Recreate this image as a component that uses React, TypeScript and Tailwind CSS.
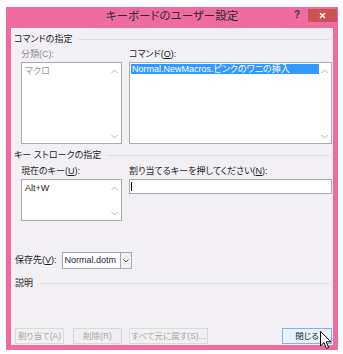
import React from 'react';

const jp = "font-['Liberation_Sans','Noto_Sans_CJK_JP',sans-serif] [font-feature-settings:'palt']";

const Chevron: React.FC<{ down?: boolean }> = ({ down }) => (
  <svg width="7" height="5" viewBox="0 0 7 5" className="block">
    <path d={down ? 'M0.5 1 L3.5 4 L6.5 1' : 'M0.5 4 L3.5 1 L6.5 4'} fill="none" stroke="#b5b5b5" strokeWidth="1" />
  </svg>
);

const ListBox: React.FC<{ className?: string; children?: React.ReactNode }> = ({ className, children }) => (
  <div className={`relative bg-white border border-[#acacac] ${className || ''}`}>
    <div className="pr-[12px]">{children}</div>
    <div className="absolute right-[3px] top-[6px]"><Chevron /></div>
    <div className="absolute right-[3px] bottom-[4px]"><Chevron down /></div>
  </div>
);

const SectionHeader: React.FC<{ title: string; className?: string }> = ({ title, className }) => (
  <div className={`flex items-center h-[12px] gap-[6px] ${className || ''}`}>
    <span className="text-[9px] leading-none text-[#1e1e1e]">{title}</span>
    <div className="flex-1 h-px bg-[#dedede] mr-[2px]" />
  </div>
);

const Btn: React.FC<{ label: React.ReactNode; className?: string; active?: boolean }> = ({ label, className, active }) => (
  <div
    className={`h-[16px] flex items-center justify-center text-[8.5px] leading-none whitespace-nowrap border ${
      active ? 'bg-[#e5f1fb] border-[#7eb4ea] text-[#1e1e1e]' : 'bg-[#f0f0f0] border-[#dadada] text-[#a6a6a6]'
    } ${className || ''}`}
  >
    {label}
  </div>
);

export default function App() {
  return (
    <div className={`w-[343px] h-[354px] bg-white pt-[7px] pl-[6px] relative ${jp}`}>
      <div className="w-[332px] h-[343px] bg-[#ef6ca1] flex flex-col px-[5px]">
        {/* title bar */}
        <div className="h-[21px] flex items-start relative">
          <div className="absolute inset-x-0 top-[4px] text-center text-[11.5px] leading-none text-[#2a2a2a]">
            キーボードのユーザー設定
          </div>
          <div className="ml-auto flex items-start">
            <span className="mt-[3px] mr-[8px] text-[10px] font-bold leading-none text-[#3a3a3a]">?</span>
            <div className="mt-[2px] -mr-[4px] w-[29px] h-[13px] bg-[#c85454] flex items-center justify-center">
              <svg width="7" height="7" viewBox="0 0 7 7">
                <path d="M1 1 L6 6 M6 1 L1 6" stroke="#ffffff" strokeWidth="1.4" />
              </svg>
            </div>
          </div>
        </div>

        {/* content */}
        <div className="flex-1 bg-[#f2f0f4] flex flex-col pt-[5px] pl-[3px] pr-[1px] mb-[5px]">
          <SectionHeader title="コマンドの指定" />
          <div className="flex gap-[7px] pl-[7px] mt-[4px]">
            <div className="w-[101px] flex flex-col">
              <div className="h-[10px] text-[9px] leading-[10px] text-[#8c8c8c]">分類(C):</div>
              <ListBox className="mt-[3px] h-[82px]">
                <div className="pl-[3px] pt-[3px] text-[9px] leading-[10px] text-[#9a9a9a]">マクロ</div>
              </ListBox>
            </div>
            <div className="w-[203px] flex flex-col">
              <div className="h-[10px] text-[9px] leading-[10px] text-[#1e1e1e]">
                コマンド(<span className="underline">O</span>):
              </div>
              <ListBox className="mt-[3px] h-[82px]">
                <div className="ml-[1px] mt-[1px] h-[10px] bg-[#3399ff] text-white text-[9px] leading-[10px] pl-[1px] whitespace-nowrap">
                  Normal.NewMacros.ピンクのワニの挿入
                </div>
              </ListBox>
            </div>
          </div>

          <SectionHeader title="キー ストロークの指定" className="mt-[5px]" />
          <div className="flex gap-[7px] pl-[7px] mt-[5px]">
            <div className="w-[101px] flex flex-col">
              <div className="h-[10px] text-[9px] leading-[10px] text-[#1e1e1e]">
                現在のキー(<span className="underline">U</span>):
              </div>
              <ListBox className="mt-[3px] h-[42px]">
                <div className="pl-[3px] pt-[3px] text-[9px] leading-[10px] text-[#1e1e1e]">Alt+W</div>
              </ListBox>
            </div>
            <div className="w-[203px] flex flex-col">
              <div className="h-[10px] text-[9px] leading-[10px] text-[#1e1e1e] whitespace-nowrap">
                割り当てるキーを押してください(<span className="underline">N</span>):
              </div>
              <div className="mt-[3px] h-[15px] bg-white border border-[#acacac] flex items-center pl-[1px]">
                <div className="w-px h-[9px] bg-black" />
              </div>
            </div>
          </div>

          <div className="flex items-center mt-[31px] pl-[1px] h-[17px]">
            <span className="text-[9px] leading-none text-[#1e1e1e]">
              保存先(<span className="underline">V</span>):
            </span>
            <div className="ml-[5px] w-[70px] h-[17px] bg-white border border-[#acacac] flex items-center">
              <span className="flex-1 pl-[2px] text-[9px] leading-none text-[#2b1d4a] whitespace-nowrap">Normal.dotm</span>
              <div className="w-[11px] h-full border-l border-[#acacac] bg-[#f0f0f0] flex items-center justify-center shrink-0">
                <svg width="6" height="4" viewBox="0 0 6 4">
                  <path d="M0.5 0.5 L3 3 L5.5 0.5" fill="none" stroke="#555" strokeWidth="1" />
                </svg>
              </div>
            </div>
          </div>

          <div className="pl-[1px]">
            <SectionHeader title="説明" className="mt-[8px]" />
          </div>

          <div className="flex mt-[39px] pl-[1px]">
            <Btn label="割り当て(A)" className="w-[49px]" />
            <Btn label="削除(R)" className="w-[49px] ml-[9px]" />
            <Btn label="すべて元に戻す(S)..." className="w-[79px] ml-[7px]" />
            <Btn label="閉じる" active className="w-[50px] ml-auto" />
          </div>
        </div>
      </div>

      {/* mouse cursor */}
      <svg className="absolute left-[320px] top-[331px]" width="12" height="19" viewBox="0 0 12 19">
        <path d="M0.5 0.5 L0.5 15 L4 11.6 L6.4 17.5 L8.6 16.6 L6.2 10.8 L11 10.8 Z" fill="#ffffff" stroke="#000000" strokeWidth="1" strokeLinejoin="round" />
      </svg>
    </div>
  );
}
